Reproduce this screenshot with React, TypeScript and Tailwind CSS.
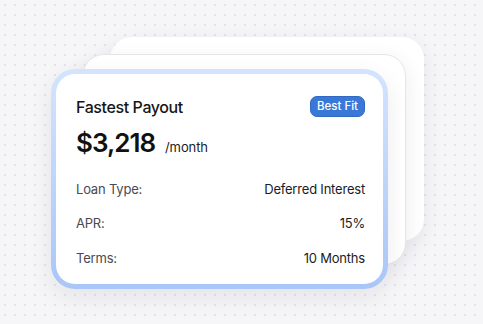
import React from "react";

export default function App() {
  const rows = [
    ["Loan Type:", "Deferred Interest"],
    ["APR:", "15%"],
    ["Terms:", "10 Months"],
  ];
  return (
    <div
      className="relative w-[483px] h-[324px] overflow-hidden bg-[#f6f6f8] bg-[radial-gradient(circle,#e3e3e7_1.2px,transparent_1.5px)] bg-[size:10px_10px]"
      style={{ fontFamily: "Inter, 'Noto Sans', sans-serif" }}
    >
      {/* back card */}
      <div className="absolute left-[110px] top-[37px] w-[314px] h-[204px] rounded-[22px] bg-white shadow-[0_6px_22px_rgba(30,30,60,0.07)]" />
      {/* middle card */}
      <div className="absolute left-[82px] top-[54px] w-[324px] h-[211px] rounded-[22px] bg-white border border-[#e6e6ea] shadow-[0_6px_22px_rgba(30,30,60,0.08)]" />
      {/* front card */}
      <div className="absolute left-[51px] top-[69px] w-[337px] h-[220px] rounded-[24px] p-[5px] bg-gradient-to-b from-[#d4e4fd] to-[#a9c6f7] shadow-[0_8px_24px_rgba(30,30,60,0.08)]">
        <div className="w-full h-full rounded-[19px] bg-white pl-5 pr-[18px] pt-[22px] flex flex-col">
          <div className="h-[21px] flex items-center justify-between">
            <span className="text-[16px] font-medium text-[#161616] tracking-[-0.4px]">Fastest Payout</span>
            <span className="h-[21px] px-[6px] rounded-[7px] bg-[#3a78d7] border border-[#3068c2] text-white text-[11.5px] font-medium leading-[19px] flex items-center">
              Best Fit
            </span>
          </div>
          <div className="mt-[9.5px] h-[32px] flex items-baseline gap-[10px]">
            <span className="text-[26px] leading-[32px] font-semibold text-[#111] tracking-[-1px]">$3,218</span>
            <span className="text-[13px] text-[#222] tracking-[-0.1px]">/month</span>
          </div>
          <div className="mt-[20px] flex flex-col gap-[14.5px]">
            {rows.map(([k, v]) => (
              <div key={k} className="h-[20px] flex items-center justify-between text-[13px] leading-[20px] tracking-[-0.2px]">
                <span className="text-[#4a4a4f]">{k}</span>
                <span className="text-[#1c1c1f]">{v}</span>
              </div>
            ))}
          </div>
        </div>
      </div>
    </div>
  );
}
